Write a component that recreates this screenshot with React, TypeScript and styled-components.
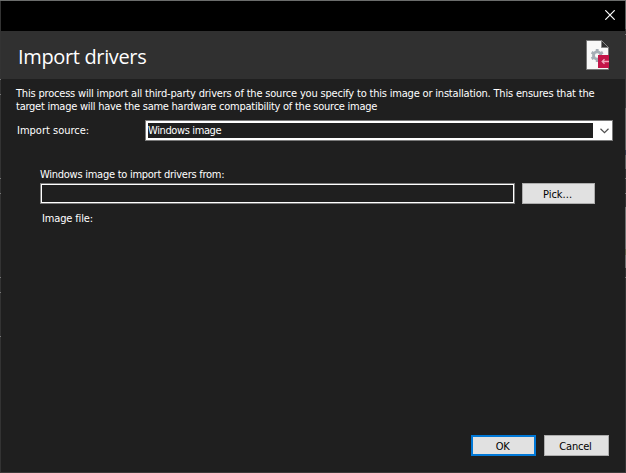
import React from "react";
import styled, { createGlobalStyle } from "styled-components";

const GlobalStyle = createGlobalStyle`
  * { box-sizing: border-box; }
  body { margin: 0; background: #1f1f1f; }
`;

const tick = (y: number) => `#333 ${y}px, #777 ${y}px, #777 ${y + 1}px, #333 ${y + 1}px`;
const leftEdge = `linear-gradient(#333 0, ${[79, 94, 178, 193, 277, 292, 336].map(tick).join(", ")}, #333 100%)`;
const rightEdge = `linear-gradient(
  #5c5e5d 0, #5c5e5d 29px, #3a3a3a 29px, ${tick(11 + 23)},
  #3a3a3a 108px, #636363 108px, #636363 150px, #343a48 150px, #343a48 155px,
  #636363 155px, #636363 169px, #333 169px, ${tick(178)}, ${tick(193)},
  #333 207px, #707070 207px, #707070 249px, #5d604c 249px, #5d604c 255px,
  #707070 255px, #707070 268px, #333 268px, ${tick(277)}, #333 100%)`;

const Dialog = styled.div`
  width: 626px;
  height: 473px;
  display: flex;
  flex-direction: column;
  padding: 1px;
  background:
    linear-gradient(#6b6d6c, #6b6d6c) 0 0 / 626px 1px no-repeat,
    linear-gradient(#3b3939, #3b3939) 0 472px / 626px 1px no-repeat,
    ${leftEdge} 0 0 / 1px 473px no-repeat,
    ${rightEdge} 625px 0 / 1px 473px no-repeat,
    #1f1f1f;
  color: #ffffff;
  font: 11px/13px "DejaVu Sans Condensed", "DejaVu Sans", sans-serif;
  font-stretch: condensed;
  overflow: hidden;
`;

const TitleBar = styled.div`
  height: 30px;
  flex: none;
  display: flex;
  justify-content: flex-end;
  background: #000000;
  padding: 9px 10px 0 0;
`;

const CloseButton = styled.button`
  width: 10px;
  height: 10px;
  padding: 0;
  border: 0;
  background: transparent;
  line-height: 0;
`;

const Header = styled.header`
  height: 48px;
  flex: none;
  display: flex;
  align-items: flex-start;
  justify-content: space-between;
  background: #303030;
  padding: 9px 16px 0 17px;
`;

const Title = styled.h1`
  margin: 0;
  font: 400 20px/34px "Open Sans", sans-serif;
  letter-spacing: -0.35px;
  white-space: nowrap;
`;

const Content = styled.main`
  flex: 1;
  display: flex;
  flex-direction: column;
  padding-top: 8px;
`;

const Text = styled.span<{ $spacing?: number }>`
  display: block;
  white-space: pre;
  letter-spacing: ${(p) => p.$spacing ?? 0}px;
`;

const Description = styled.div`
  margin-left: 15px;
`;

const SourceRow = styled.div`
  display: flex;
  align-items: center;
  margin: 7px 0 0 16px;
  height: 21px;
`;

const SourceLabel = styled.div`
  width: 128px;
`;

const Combo = styled.div`
  width: 468px;
  height: 21px;
  display: flex;
  border: 1px solid #7a7a7a;
  background: #ffffff;
  padding: 2px 0 2px 2px;
`;

const ComboValue = styled.div`
  width: 445px;
  height: 15px;
  background: #1f1f1f;
  line-height: 16px;
`;

const ComboArrow = styled.div`
  flex: 1;
  display: flex;
  align-items: center;
  justify-content: center;
  padding-left: 3px;
`;

const ImageGroup = styled.section`
  margin: 27px 0 0 39px;
`;

const FieldRow = styled.div`
  display: flex;
  gap: 7px;
  margin: 2px 0 8px;
`;

const Field = styled.input`
  width: 475px;
  height: 21px;
  padding: 0;
  border: 1px solid #7a7a7a;
  outline: 1px solid #ffffff;
  outline-offset: -2px;
  border-radius: 0;
  background: #1f1f1f;
  color: #ffffff;
`;

const FileLabel = styled.div`
  margin-left: 2px;
`;

const Button = styled.button<{ $width: number; $primary?: boolean }>`
  width: ${(p) => p.$width}px;
  height: 21px;
  display: flex;
  align-items: center;
  justify-content: center;
  padding: 1px 2px 0 0;
  border: ${(p) => (p.$primary ? "2px solid #0078d7" : "1px solid #adadad")};
  border-radius: 0;
  background: #e1e1e1;
  color: #000000;
  font: inherit;
`;

const Footer = styled.footer`
  display: flex;
  justify-content: flex-end;
  gap: 8px;
  margin-top: auto;
  padding: 0 16px 16px 0;
`;

const CloseIcon = () => (
  <svg width="10" height="10" viewBox="0 0 10 10">
    <path d="M0.3 0.3 9.7 9.7M9.7 0.3 0.3 9.7" stroke="#fff" strokeWidth="1.2" />
  </svg>
);

const ChevronIcon = () => (
  <svg width="9" height="6" viewBox="0 0 9 6">
    <path d="M0.5 0.8 4.5 4.6 8.5 0.8" fill="none" stroke="#505050" strokeWidth="1.2" />
  </svg>
);

const DriverFileIcon = () => (
  <svg width="23" height="30" viewBox="0 0 23 30">
    <path d="M.5.5h15l7 7v22H.5z" fill="#f8f8f8" stroke="#777" />
    <path d="M16 0v7h7V0z" fill="#303030" />
    <path d="M15.5.5v7h7z" fill="#303030" stroke="#858585" />
    <circle cx="11.2" cy="15.5" r="3.7" fill="none" stroke="#a5adb5" strokeWidth="2.8" />
    <path
      d="M11.2 9v3M11.2 19v3M5.6 12.2l2.5 1.5M14.3 17.3l2.5 1.5M5.6 18.8l2.5-1.5M14.3 13.7l2.5-1.5"
      stroke="#a5adb5"
      strokeWidth="2.8"
    />
    <path d="M12 15h11v13H12z" fill="#c31549" />
    <path d="M23 21.5h-7M18.5 19.2l-2.3 2.3 2.3 2.3" fill="none" stroke="#f1a6bd" strokeWidth="1.3" />
  </svg>
);

export default function App() {
  return (
    <>
      <GlobalStyle />
      <Dialog>
        <TitleBar>
          <CloseButton aria-label="Close"><CloseIcon /></CloseButton>
        </TitleBar>
        <Header>
          <Title>Import drivers</Title>
          <DriverFileIcon />
        </Header>
        <Content>
          <Description>
            <Text $spacing={-0.19}>This process will import all third-party drivers of the source you specify to this image or installation. This ensures that the</Text>
            <Text $spacing={-0.25}>target image will have the same hardware compatibility of the source image</Text>
          </Description>
          <SourceRow>
            <SourceLabel><Text>Import source:</Text></SourceLabel>
            <Combo>
              <ComboValue><Text $spacing={-0.38}>Windows image</Text></ComboValue>
              <ComboArrow><ChevronIcon /></ComboArrow>
            </Combo>
          </SourceRow>
          <ImageGroup>
            <Text $spacing={-0.26}>Windows image to import drivers from:</Text>
            <FieldRow>
              <Field aria-label="Windows image" />
              <Button $width={73}><Text>Pick...</Text></Button>
            </FieldRow>
            <FileLabel><Text $spacing={-0.15}>Image file:</Text></FileLabel>
          </ImageGroup>
          <Footer>
            <Button $width={65} $primary><Text $spacing={-0.3}>OK</Text></Button>
            <Button $width={65}><Text $spacing={-0.2}>Cancel</Text></Button>
          </Footer>
        </Content>
      </Dialog>
    </>
  );
}
